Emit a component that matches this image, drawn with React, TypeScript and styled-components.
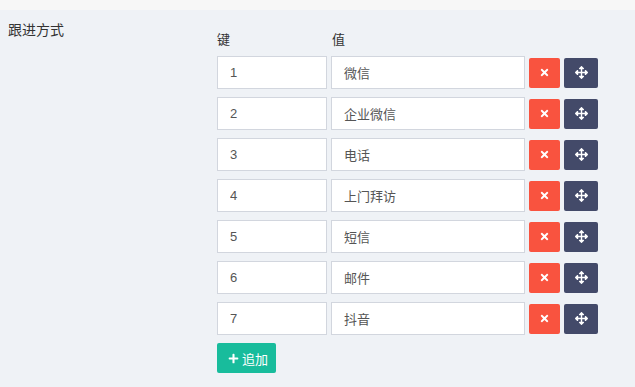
import React from 'react';
import styled, { createGlobalStyle } from 'styled-components';
import { FaTimes, FaArrowsAlt, FaPlus } from 'react-icons/fa';

const GlobalStyle = createGlobalStyle`
  body {
    margin: 0;
    background: #eff2f6;
    font-family: "Liberation Sans", "Noto Sans CJK SC", sans-serif;
    font-size: 13px;
    color: #333;
  }
`;

const items = [
  { key: '1', value: '微信' },
  { key: '2', value: '企业微信' },
  { key: '3', value: '电话' },
  { key: '4', value: '上门拜访' },
  { key: '5', value: '短信' },
  { key: '6', value: '邮件' },
  { key: '7', value: '抖音' },
];

const App = () => {
  return (
    <>
      <GlobalStyle />
      <TopBar />
      <FormGroup>
        <Label>跟进方式</Label>
        <Field>
          <HeaderRow>
            <KeyHead>键</KeyHead>
            <span>值</span>
          </HeaderRow>
          {items.map((item) => (
            <Row key={item.key}>
              <KeyInput defaultValue={item.key} />
              <ValueInput defaultValue={item.value} />
              <IconButton $color="#f9533f" $width={31}>
                <FaTimes size={11} />
              </IconButton>
              <IconButton $color="#434a69" $width={34}>
                <FaArrowsAlt size={13} />
              </IconButton>
            </Row>
          ))}
          <AddButton>
            <FaPlus size={11} />
            追加
          </AddButton>
        </Field>
      </FormGroup>
    </>
  );
};

export default App;

const TopBar = styled.div`
  height: 10px;
  background: #f7f7f7;
`;

const FormGroup = styled.div`
  display: grid;
  grid-template-columns: 209px 1fr;
  padding: 11px 0 0 8px;
  height: 366px;
  box-sizing: border-box;
`;

const Label = styled.div`
  font-size: 14px;
  line-height: 18px;
  color: #333;
`;

const Field = styled.div`
  display: flex;
  flex-direction: column;
  align-items: flex-start;
  padding-top: 10px;
`;

const HeaderRow = styled.div`
  display: flex;
  height: 25px;
  line-height: 18px;
  font-size: 13px;
  color: #333;
`;

const KeyHead = styled.span`
  width: 115px;
`;

const Row = styled.div`
  display: flex;
  align-items: center;
  gap: 4px;
  height: 33px;
  margin-bottom: 8px;
`;

const BaseInput = styled.input`
  box-sizing: border-box;
  height: 33px;
  border: 1px solid #d2d6de;
  background: #fff;
  padding: 0 12px;
  font-family: "Liberation Sans", "Noto Sans CJK SC", sans-serif;
  font-size: 13px;
  color: #555;
  outline: none;
`;

const KeyInput = styled(BaseInput)`
  width: 110px;
`;

const ValueInput = styled(BaseInput)`
  width: 194px;
`;

const IconButton = styled.button<{ $color: string; $width: number }>`
  display: flex;
  align-items: center;
  justify-content: center;
  width: ${(p) => p.$width}px;
  height: 30px;
  padding: 0;
  border: none;
  border-radius: 2px;
  background: ${(p) => p.$color};
  color: #fff;
`;

const AddButton = styled.button`
  display: flex;
  align-items: center;
  gap: 3px;
  height: 30px;
  width: 59px;
  padding: 0 0 0 11px;
  border: none;
  border-radius: 2px;
  background: #18bc9c;
  color: #fff;
  font-family: "Liberation Sans", "Noto Sans CJK SC", sans-serif;
  font-size: 13px;
`;
